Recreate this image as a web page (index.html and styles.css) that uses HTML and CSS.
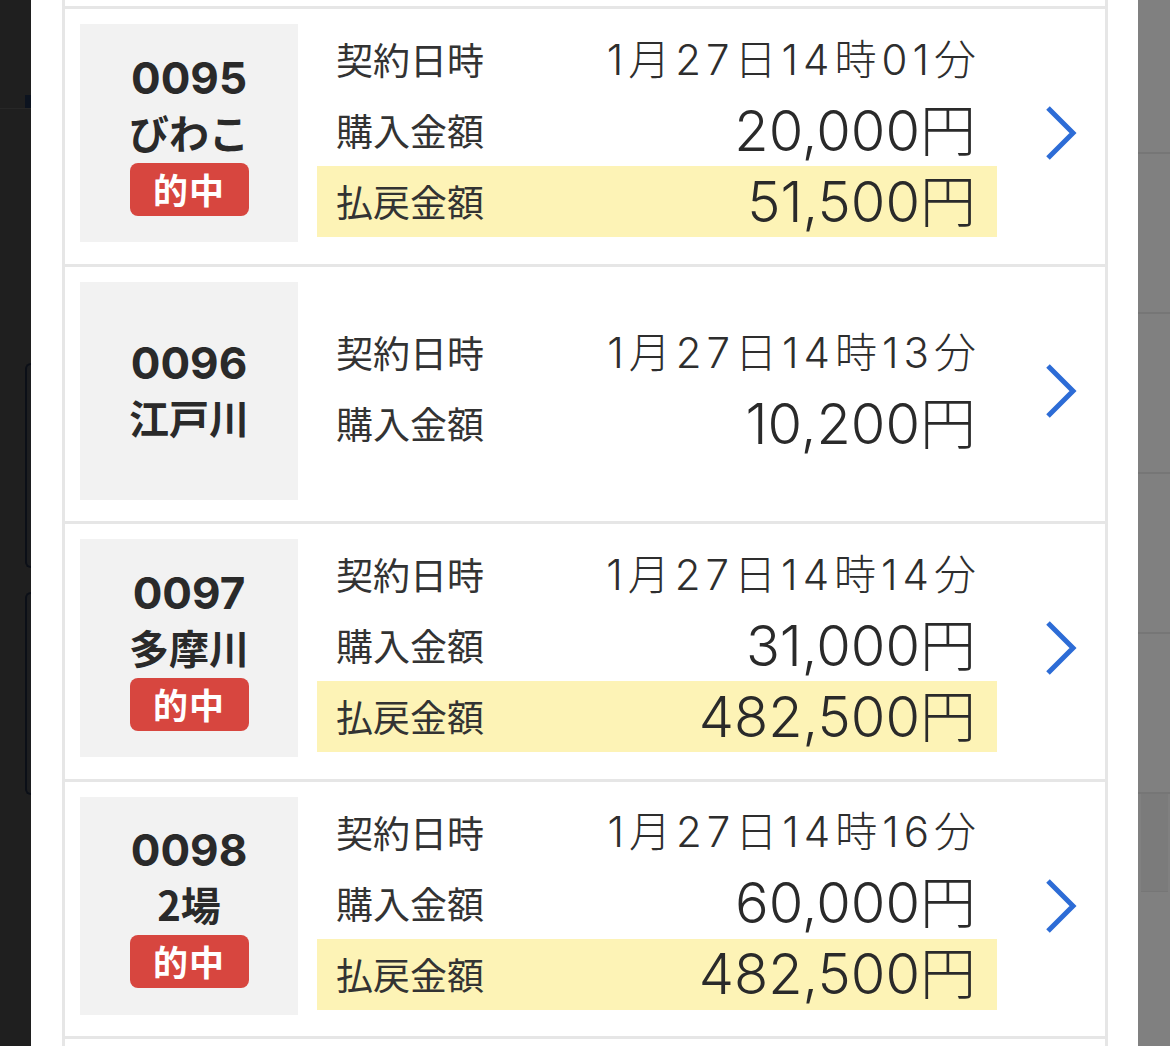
FILE: index.html
```html
<!DOCTYPE html>
<html lang="ja">
<head>
<meta charset="utf-8">
<title>購入履歴</title>
<link rel="stylesheet" href="styles.css">
</head>
<body>
<div class="screen">
  <div class="bg-left">
    <div class="bg-header"><div class="bg-tab"></div></div>
    <div class="bg-card bg-card-a"></div>
    <div class="bg-card bg-card-b"></div>
  </div>

  <div class="modal">
    <div class="ticket-list">
      <div class="ticket-cut-top"></div>

      <div class="ticket">
        <div class="ticket-id">
          <div class="ticket-no">0095</div>
          <div class="ticket-venue">びわこ</div>
          <div class="badge">的中</div>
        </div>
        <div class="ticket-info">
          <div class="info-row"><span class="info-label">契約日時</span><span class="info-date">1月27日14時01分</span></div>
          <div class="info-row"><span class="info-label">購入金額</span><span class="info-amount">20,000円</span></div>
          <div class="info-row payout"><span class="info-label">払戻金額</span><span class="info-amount">51,500円</span></div>
        </div>
        <div class="ticket-arrow"><svg viewBox="0 0 34 56" width="34" height="56"><polyline points="4,3 29,28 4,53" /></svg></div>
      </div>

      <div class="ticket">
        <div class="ticket-id">
          <div class="ticket-no">0096</div>
          <div class="ticket-venue">江戸川</div>
        </div>
        <div class="ticket-info">
          <div class="info-row"><span class="info-label">契約日時</span><span class="info-date">1月27日14時13分</span></div>
          <div class="info-row"><span class="info-label">購入金額</span><span class="info-amount">10,200円</span></div>
        </div>
        <div class="ticket-arrow"><svg viewBox="0 0 34 56" width="34" height="56"><polyline points="4,3 29,28 4,53" /></svg></div>
      </div>

      <div class="ticket">
        <div class="ticket-id">
          <div class="ticket-no">0097</div>
          <div class="ticket-venue">多摩川</div>
          <div class="badge">的中</div>
        </div>
        <div class="ticket-info">
          <div class="info-row"><span class="info-label">契約日時</span><span class="info-date">1月27日14時14分</span></div>
          <div class="info-row"><span class="info-label">購入金額</span><span class="info-amount">31,000円</span></div>
          <div class="info-row payout"><span class="info-label">払戻金額</span><span class="info-amount">482,500円</span></div>
        </div>
        <div class="ticket-arrow"><svg viewBox="0 0 34 56" width="34" height="56"><polyline points="4,3 29,28 4,53" /></svg></div>
      </div>

      <div class="ticket">
        <div class="ticket-id">
          <div class="ticket-no">0098</div>
          <div class="ticket-venue">2場</div>
          <div class="badge">的中</div>
        </div>
        <div class="ticket-info">
          <div class="info-row"><span class="info-label">契約日時</span><span class="info-date">1月27日14時16分</span></div>
          <div class="info-row"><span class="info-label">購入金額</span><span class="info-amount">60,000円</span></div>
          <div class="info-row payout"><span class="info-label">払戻金額</span><span class="info-amount">482,500円</span></div>
        </div>
        <div class="ticket-arrow"><svg viewBox="0 0 34 56" width="34" height="56"><polyline points="4,3 29,28 4,53" /></svg></div>
      </div>

      <div class="ticket ticket-cut-bottom"></div>
    </div>
  </div>

  <div class="bg-right">
    <div class="rs-row rs-first"></div>
    <div class="rs-row"></div>
    <div class="rs-row"></div>
    <div class="rs-row"></div>
    <div class="rs-row"></div>
    <div class="rs-block"></div>
  </div>
</div>
</body>
</html>
```

FILE: styles.css
```css
* { box-sizing: border-box; }

html, body {
  margin: 0;
  padding: 0;
  width: 1170px;
  height: 1046px;
  overflow: hidden;
  background: #1f1f1f;
  font-family: "Noto Sans CJK JP", sans-serif;
  color: #2e2e2e;
}

.screen {
  display: flex;
  width: 1170px;
  height: 1046px;
  overflow: hidden;
}

/* dimmed page behind the sheet */
.bg-left {
  width: 31px;
  flex: 0 0 31px;
  background: #1f1f1f;
  display: flex;
  flex-direction: column;
}
.bg-header {
  height: 109px;
  border-bottom: 1px solid #272727;
  display: flex;
  justify-content: flex-end;
  align-items: flex-end;
}
.bg-tab {
  width: 6px;
  height: 13px;
  background: #0c131f;
}
.bg-card {
  margin-left: 25px;
  border: 2px solid #0b0f17;
  border-right: 0;
  border-radius: 8px 0 0 8px;
  background: #1d1e20;
}
.bg-card-a { margin-top: 254px; height: 205px; }
.bg-card-b { margin-top: 24px; height: 203px; }

.bg-right {
  width: 32px;
  flex: 0 0 32px;
  background: #808080;
  display: flex;
  flex-direction: column;
}
.rs-row {
  height: 160px;
  border-bottom: 2px solid #767676;
  flex: 0 0 auto;
}
.rs-first { height: 154px; }
.rs-block {
  height: 98px;
  margin: 0 2px 0 3px;
  background: #7b7b7b;
  border-bottom: 1px solid #767676;
}

/* sheet */
.modal {
  flex: 1 1 auto;
  background: #ffffff;
  overflow: hidden;
}
.ticket-list {
  padding: 0 30px 0 31px;
  display: flex;
  flex-direction: column;
}
.ticket-cut-top {
  height: 9px;
  border: 3px solid #e6e6e6;
  border-top: 0;
}

.ticket {
  display: flex;
  align-items: center;
  border: 3px solid #e6e6e6;
  margin-top: -3px;
  padding: 15px 0 21.5px 15px;
  background: #fff;
  flex: 0 0 auto;
}
.ticket-cut-bottom {
  height: 40px;
  padding: 0;
}

.ticket-id {
  width: 218px;
  height: 218px;
  flex: 0 0 218px;
  background: #f2f2f2;
  display: flex;
  flex-direction: column;
  align-items: center;
  justify-content: center;
}
.ticket-no {
  font-family: Inter, "Noto Sans CJK JP", sans-serif;
  font-weight: 700;
  font-size: 44px;
  line-height: 54px;
  color: #2a2a2a;
}
.ticket-venue {
  font-family: "Noto Sans CJK JP", sans-serif;
  font-weight: 700;
  font-size: 40px;
  line-height: 55px;
  color: #2a2a2a;
}
.badge {
  margin-top: 3px;
  width: 119px;
  height: 53px;
  border-radius: 8px;
  background: #d7463f;
  color: #fff;
  font-family: "Noto Sans CJK JP", sans-serif;
  font-weight: 700;
  font-size: 35px;
  line-height: 51px;
  text-align: center;
  letter-spacing: 1px;
}

.ticket-info {
  width: 680px;
  flex: 0 0 680px;
  margin-left: 19px;
  padding-bottom: 5px;
  display: flex;
  flex-direction: column;
}
.info-row {
  height: 71px;
  display: flex;
  align-items: center;
  justify-content: space-between;
  padding: 0 21px 0 19px;
}
.payout { background: #fdf3b6; }

.info-label {
  font-family: "Noto Sans CJK JP", sans-serif;
  font-weight: 400;
  font-size: 37px;
  line-height: 1;
  color: #333;
}
.info-date {
  font-family: Inter, "Noto Sans CJK JP", sans-serif;
  font-weight: 300;
  font-size: 42px;
  line-height: 1;
  letter-spacing: 5px;
  margin-right: -5px;
  color: #2e2e2e;
}
.info-amount {
  font-family: Inter, "Noto Sans CJK JP", sans-serif;
  font-weight: 300;
  font-size: 56px;
  line-height: 1;
  color: #2a2a2a;
}

.ticket-arrow {
  margin-left: 47px;
  width: 34px;
  height: 56px;
  display: flex;
}
.ticket-arrow polyline {
  fill: none;
  stroke: #2d6cd6;
  stroke-width: 5;
}
```
